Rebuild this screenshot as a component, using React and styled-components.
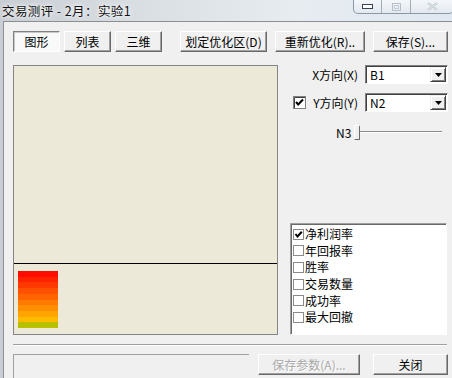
import React from "react";
import styled, { createGlobalStyle, css } from "styled-components";

const GlobalStyle = createGlobalStyle`
  html, body {
    margin: 0;
    padding: 0;
    background: #dfe5ec;
  }
  body {
    font-family: "Noto Sans CJK SC", "Liberation Sans", sans-serif;
    font-size: 12px;
    color: #000;
  }
`;

const Window = styled.div`
  width: 452px;
  height: 378px;
  overflow: hidden;
  display: flex;
  flex-direction: column;
  background: linear-gradient(90deg, #c9ced4 0%, #d9dee3 30%, #e7ecf1 65%, #dfe8f1 100%);
`;

const TitleBar = styled.div`
  height: 23px;
  display: flex;
  align-items: flex-start;
`;

const Title = styled.div`
  padding: 3px 0 0 2px;
  line-height: 16px;
  font-size: 12.5px;
  letter-spacing: 0.4px;
  color: #111;
  text-shadow: 0 0 6px #fff, 0 0 3px #fff;
`;

const Controls = styled.div`
  margin-left: auto;
  margin-right: -2px;
  display: flex;
  height: 13px;
  border: 1px solid #8e99a5;
  border-top: none;
  border-radius: 0 0 5px 5px;
  background: linear-gradient(#f4f7fa, #e2e9f0);
  overflow: hidden;
`;

const CtlButton = styled.div`
  width: ${(p) => p.$w}px;
  display: flex;
  align-items: center;
  justify-content: center;
  & + & {
    border-left: 1px solid #a3acb6;
  }
`;

const Body = styled.div`
  flex: 1;
  margin-left: 3px;
  border-top: 1px solid #8c8f92;
  border-left: 1px solid #8c8f92;
  background: #f0f0f0;
  display: flex;
  flex-direction: column;
  padding: 9px 4px 0 9px;
`;

const Toolbar = styled.div`
  display: flex;
  height: 21px;
`;

const ToolGroup = styled.div`
  display: flex;
  gap: ${(p) => p.$gap}px;
  margin-left: ${(p) => p.$offset || 0}px;
`;

const Button = styled.button`
  box-sizing: border-box;
  width: ${(p) => p.$w}px;
  height: 21px;
  padding: 0;
  font-family: inherit;
  font-size: 12px;
  line-height: 17px;
  color: #000;
  background: #f0f0f0;
  border: 1px solid;
  border-color: #fff #696969 #696969 #fff;
  box-shadow: inset -1px -1px #a0a0a0;
  white-space: nowrap;
  ${(p) =>
    p.$pressed &&
    css`
      background: #f9f9f9;
      border-color: #808080 #fff #fff #808080;
      box-shadow: inset 1px 1px #c8c8c8;
    `}
  &:disabled {
    color: #a8a8a8;
    text-shadow: 1px 1px #fff;
  }
`;

const MainRow = styled.div`
  display: flex;
  margin-top: 13px;
  height: 270px;
`;

const Plot = styled.div`
  box-sizing: border-box;
  width: 265px;
  border: 1px solid #858585;
  background: #ece9d8;
  display: flex;
  flex-direction: column;
`;

const PlotArea = styled.div`
  height: 197px;
  border-bottom: 1px solid #000;
`;

const LegendArea = styled.div`
  flex: 1;
  padding: 7px 0 0 4px;
`;

const Legend = styled.div`
  width: 40px;
  height: 57px;
  display: flex;
  flex-direction: column;
`;

const Band = styled.div`
  flex: 1;
  background: ${(p) => p.$c};
`;

const Side = styled.div`
  margin-left: 12px;
  width: 158px;
  display: flex;
  flex-direction: column;
`;

const FieldRow = styled.div`
  display: flex;
  align-items: center;
  height: 19px;
  margin-top: ${(p) => p.$top || 0}px;
`;

const CheckSlot = styled.span`
  display: flex;
  margin-left: 3px;
`;

const Label = styled.div`
  flex: 1;
  text-align: right;
  padding-right: 7px;
  white-space: nowrap;
`;

const Combo = styled.div`
  box-sizing: border-box;
  width: 83px;
  height: 19px;
  background: #fff;
  border: 1px solid;
  border-color: #808080 #fff #fff #808080;
  box-shadow: inset 1px 1px #404040;
  display: flex;
  align-items: center;
  padding: 1px 1px 1px 4px;
  font-size: 12px;
`;

const DropBtn = styled.div`
  box-sizing: border-box;
  margin-left: auto;
  width: 16px;
  height: 15px;
  background: #f0f0f0;
  border: 1px solid;
  border-color: #f0f0f0 #404040 #404040 #f0f0f0;
  box-shadow: inset 1px 1px #fff, inset -1px -1px #808080;
  display: flex;
  align-items: center;
  justify-content: center;
`;

const SliderRow = styled.div`
  display: flex;
  align-items: center;
  height: 15px;
  margin-top: 13px;
  padding-left: 46px;
`;

const Slider = styled.div`
  position: relative;
  margin-left: 3px;
  width: 88px;
  height: 15px;
`;

const Track = styled.div`
  position: absolute;
  left: 2px;
  right: 0;
  top: 6px;
  height: 1px;
  background: #8a8a8a;
  border-bottom: 1px solid #fff;
`;

const Thumb = styled.div`
  position: absolute;
  left: 0;
  top: 0;
  box-sizing: border-box;
  width: 6px;
  height: 15px;
  background: #f0f0f0;
  border: 1px solid;
  border-color: #fff #696969 #696969 #fff;
  border-radius: 2px 2px 1px 1px;
`;

const ListBox = styled.div`
  margin-top: auto;
  box-sizing: border-box;
  width: 157px;
  height: 112px;
  background: #fff;
  border: 1px solid;
  border-color: #a0a0a0 #fff #fff #a0a0a0;
  box-shadow: inset 1px 1px #696969;
  padding: 2px 0 0 2px;
`;

const ListItem = styled.div`
  display: flex;
  align-items: center;
  height: 16.6px;
  line-height: 16px;
  gap: 1px;
`;

const Separator = styled.div`
  margin-top: 9px;
  margin-right: 1px;
  border-top: 1px solid #a0a0a0;
  border-bottom: 1px solid #fff;
`;

const FooterRow = styled.div`
  display: flex;
  align-items: flex-start;
  margin-top: 8px;
`;

const StatusBox = styled.div`
  box-sizing: border-box;
  width: 236px;
  height: 24px;
  border-top: 1px solid #a0a0a0;
  border-left: 1px solid #a0a0a0;
`;

const FooterButton = styled(Button)`
  margin-left: ${(p) => p.$offset}px;
`;

const Arrow = () => (
  <svg width="7" height="4" viewBox="0 0 7 4">
    <path d="M0 0 H7 L3.5 4 Z" fill="#000" />
  </svg>
);

const CheckBox = ({ checked }) => (
  <svg width="13" height="13" viewBox="0 0 13 13">
    <rect x="0.5" y="0.5" width="12" height="12" fill="#fff" stroke="#808080" />
    <path d="M1.5 12 V1.5 H12" stroke="#404040" fill="none" />
    {checked && <path d="M3 6 L5.2 8.5 L10 3.5" stroke="#000" strokeWidth="2" fill="none" />}
  </svg>
);

const ListCheck = ({ checked }) => (
  <svg width="11" height="11" viewBox="0 0 11 11">
    <rect x="0.5" y="0.5" width="10" height="10" fill="#fff" stroke="#8a8a8a" />
    {checked && <path d="M2.5 5 L4.5 7.5 L8.8 2.8" stroke="#000" strokeWidth="2" fill="none" />}
  </svg>
);

const bands = [
  "#ff0c00",
  "#ff2200",
  "#ff3800",
  "#ff4f00",
  "#ff6400",
  "#ff7a00",
  "#ff8f00",
  "#ffa400",
  "#ffbb00",
  "#b9c000",
];

const metrics = [
  { name: "净利润率", on: true },
  { name: "年回报率" },
  { name: "胜率" },
  { name: "交易数量" },
  { name: "成功率" },
  { name: "最大回撤" },
];

const App = () => {
  return (
    <Window>
      <GlobalStyle />
      <TitleBar>
        <Title>交易测评 - 2月：实验1</Title>
        <Controls>
          <CtlButton $w={27}>
            <svg width="11" height="5" viewBox="0 0 11 5">
              <rect x="0.5" y="0.5" width="10" height="4" fill="#fff" stroke="#3a4350" />
            </svg>
          </CtlButton>
          <CtlButton $w={28}>
            <svg width="9" height="8" viewBox="0 0 9 8">
              <rect x="0.5" y="0.5" width="8" height="7" fill="none" stroke="#b7bfc8" />
              <rect x="2.5" y="2.5" width="4" height="3" fill="none" stroke="#c5ccd3" />
            </svg>
          </CtlButton>
          <CtlButton $w={42}>
            <svg width="11" height="9" viewBox="0 0 11 9">
              <path d="M1 1 L10 8 M10 1 L1 8" stroke="#b9c1ca" strokeWidth="2.2" />
              <path d="M1 1 L10 8 M10 1 L1 8" stroke="#f3f5f7" strokeWidth="0.8" />
            </svg>
          </CtlButton>
        </Controls>
      </TitleBar>
      <Body>
        <Toolbar>
          <ToolGroup $gap={4}>
            <Button $w={47} $pressed>图形</Button>
            <Button $w={47}>列表</Button>
            <Button $w={47}>三维</Button>
          </ToolGroup>
          <ToolGroup $gap={8} $offset={18}>
            <Button $w={87}>划定优化区(D)</Button>
            <Button $w={90}>重新优化(R)..</Button>
            <Button $w={75}>保存(S)...</Button>
          </ToolGroup>
        </Toolbar>
        <MainRow>
          <Plot>
            <PlotArea />
            <LegendArea>
              <Legend>
                {bands.map((c) => (
                  <Band key={c} $c={c} />
                ))}
              </Legend>
            </LegendArea>
          </Plot>
          <Side>
            <FieldRow>
              <Label>X方向(X)</Label>
              <Combo>
                B1
                <DropBtn>
                  <Arrow />
                </DropBtn>
              </Combo>
            </FieldRow>
            <FieldRow $top={9}>
              <CheckSlot>
                <CheckBox checked />
              </CheckSlot>
              <Label>Y方向(Y)</Label>
              <Combo>
                N2
                <DropBtn>
                  <Arrow />
                </DropBtn>
              </Combo>
            </FieldRow>
            <SliderRow>
              N3
              <Slider>
                <Track />
                <Thumb />
              </Slider>
            </SliderRow>
            <ListBox>
              {metrics.map((m) => (
                <ListItem key={m.name}>
                  <ListCheck checked={m.on} />
                  {m.name}
                </ListItem>
              ))}
            </ListBox>
          </Side>
        </MainRow>
        <Separator />
        <FooterRow>
          <StatusBox />
          <FooterButton $w={102} $offset={9} disabled>
            保存参数(A)...
          </FooterButton>
          <FooterButton $w={75} $offset={13}>
            关闭
          </FooterButton>
        </FooterRow>
      </Body>
    </Window>
  );
};

export default App;
